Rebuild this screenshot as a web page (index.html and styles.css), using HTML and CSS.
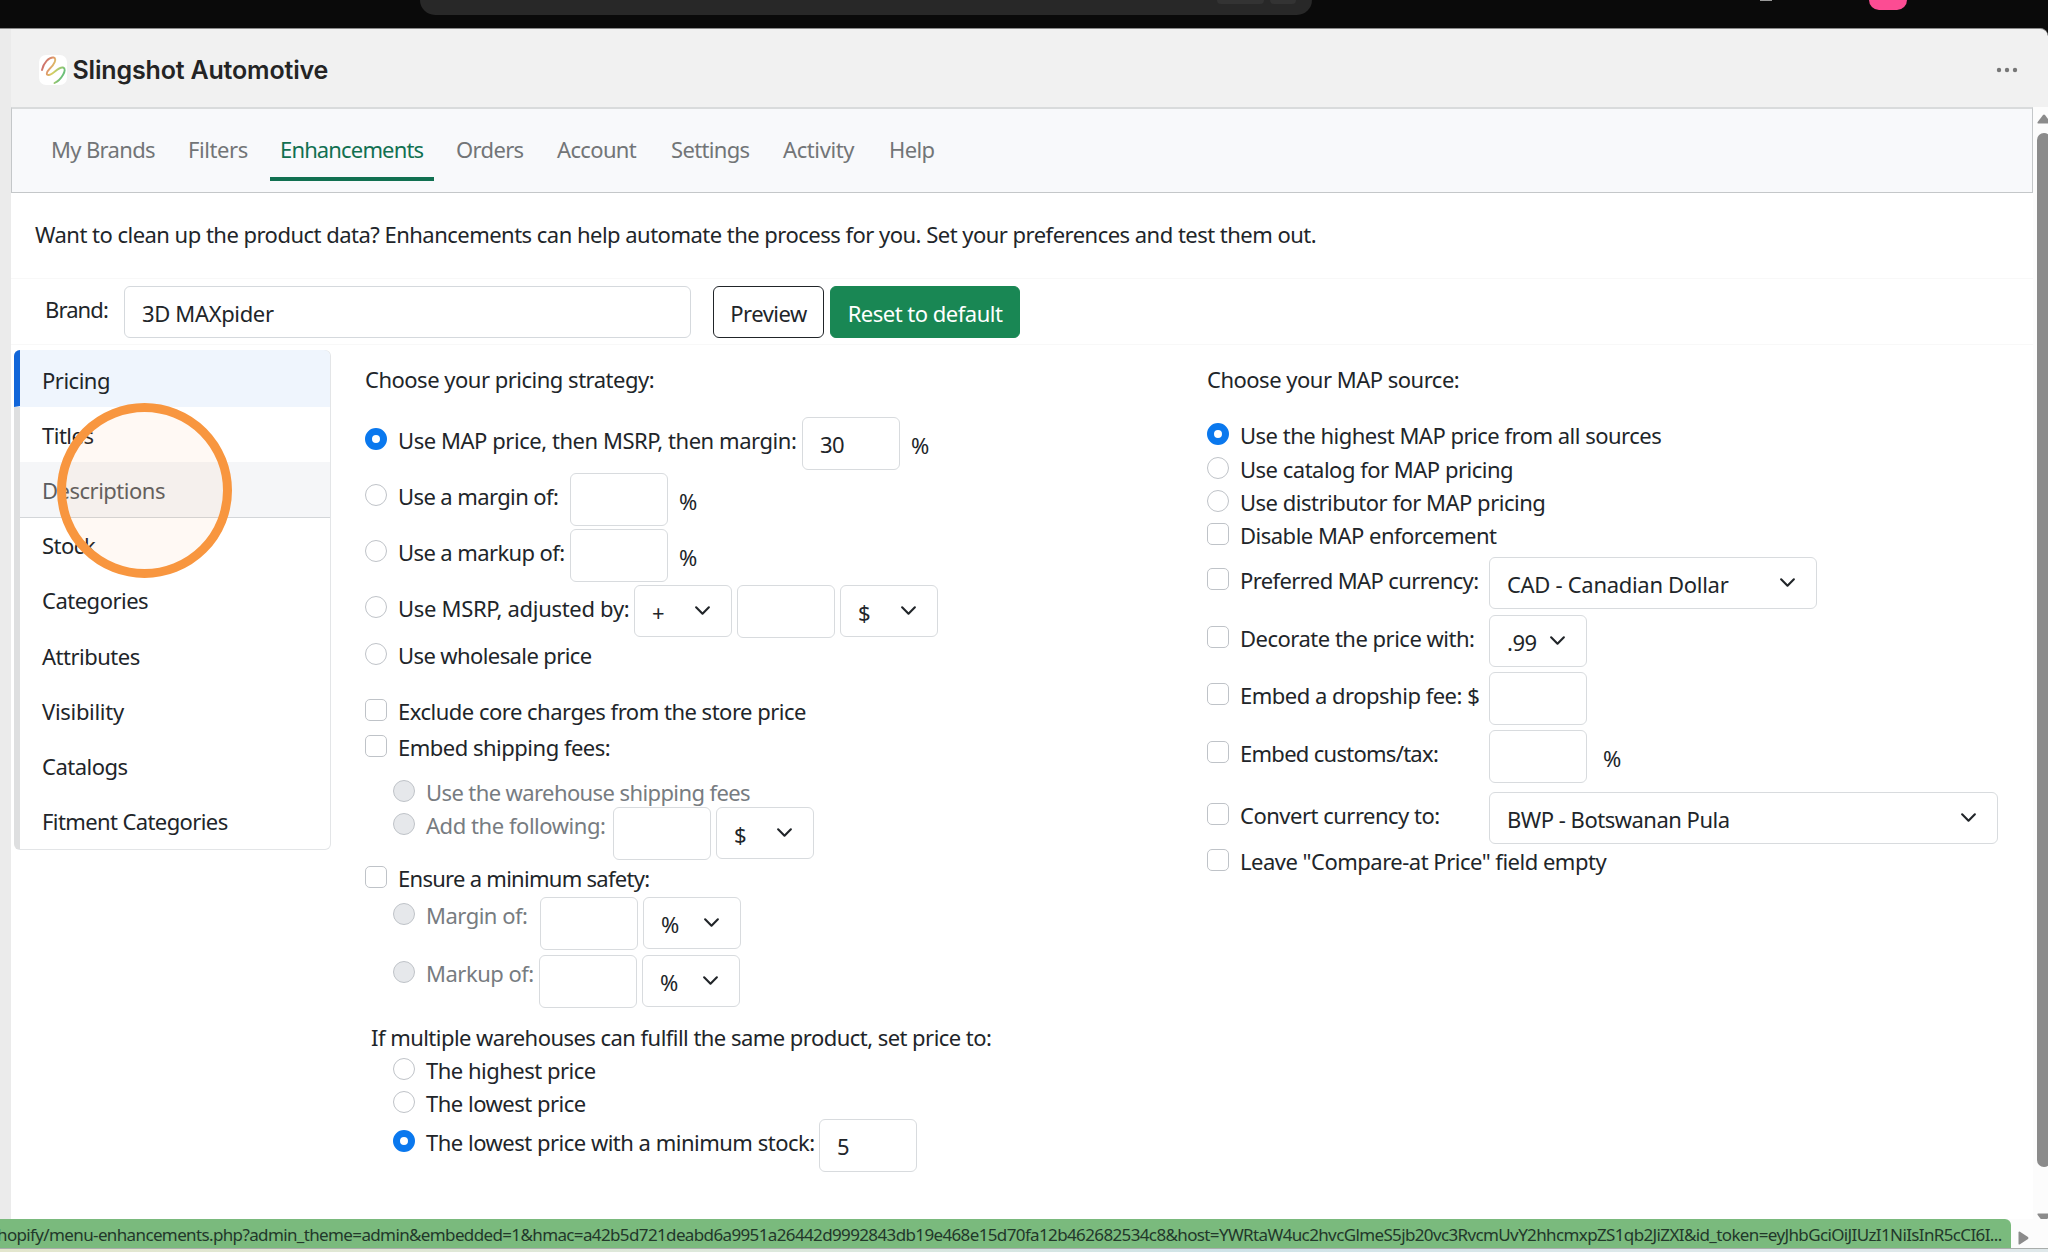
FILE: index.html
```html
<!DOCTYPE html>
<html lang="en">
<head>
<meta charset="utf-8">
<title>Slingshot Automotive</title>
<link rel="stylesheet" href="styles.css">
</head>
<body>
<svg class="defs" aria-hidden="true"><symbol id="chev" viewBox="0 0 16 16"><path d="M2 5l6 6 6-6" fill="none" stroke="#212529" stroke-width="2" stroke-linecap="round" stroke-linejoin="round"/></symbol></svg>
<div class="browser-bar">
  <div class="address"><i class="chip"></i><i class="chip small"></i></div>
  <i class="blip"></i>
  <i class="avatar"></i>
</div>
<div class="page">
  <div class="rail"></div>
  <div class="app">
    <header class="app-header">
      <svg class="logo" viewBox="0 0 28 30">
        <defs><linearGradient id="lg" x1="0" y1="0" x2="1" y2="0.5"><stop offset="0" stop-color="#c2566c"/><stop offset=".45" stop-color="#e0a06a"/><stop offset=".6" stop-color="#d9cf62"/><stop offset="1" stop-color="#6cc07a"/></linearGradient></defs>
        <rect width="28" height="30" rx="7" fill="#fff"/>
        <path d="M3 15C4.500 8 10 2 14.500 2.500C18.500 3.500 15 10 10.500 14C7 17.500 7 20.500 10 20C15 19 19 11.500 24 12.500C29 14 22 25 15.500 28" fill="none" stroke="url(#lg)" stroke-width="1.900" stroke-linecap="round"/>
      </svg>
      <h1>Slingshot Automotive</h1>
      <svg class="more" viewBox="0 0 22 6"><g fill="#777"><circle cx="3" cy="3" r="2.200"/><circle cx="11" cy="3" r="2.200"/><circle cx="19" cy="3" r="2.200"/></g></svg>
    </header>
    <div class="frame">
      <main>
        <nav class="tabs">
          <a class="t1">My Brands</a><a class="t2">Filters</a><a class="t3 active">Enhancements</a><a class="t4">Orders</a><a class="t5">Account</a><a class="t6">Settings</a><a class="t7">Activity</a><a class="t8">Help</a>
        </nav>
        <p class="intro"><span>Want to clean up the product data? Enhancements can help automate the process for you. Set your preferences and test them out.</span></p>
        <div class="brand-bar">
          <span class="brand-label">Brand:</span>
          <div class="brand-input"><span>3D MAXpider</span></div>
          <button class="btn preview"><span>Preview</span></button>
          <button class="btn reset"><span>Reset to default</span></button>
        </div>
        <div class="content">
          <aside class="menu">
            <a class="current"><span>Pricing</span></a>
            <a><span>Titles</span></a>
            <a class="hover"><span>Descriptions</span></a>
            <a><span>Stock</span></a>
            <a><span>Categories</span></a>
            <a><span>Attributes</span></a>
            <a><span class="loose">Visibility</span></a>
            <a><span>Catalogs</span></a>
            <a><span class="snug">Fitment Categories</span></a>
            <div class="pointer"></div>
          </aside>
          <section class="col left">
            <div class="heading"><span>Choose your pricing strategy:</span></div>
            <div class="row field"><div class="choice w437"><i class="radio on"></i><span class="roomy">Use MAP price, then MSRP, then margin:</span></div><div class="input"><span>30</span></div><span class="unit">%</span></div>
            <div class="row field"><div class="choice w205"><i class="radio"></i><span class="snug">Use a margin of:</span></div><div class="input"></div><span class="unit">%</span></div>
            <div class="row field"><div class="choice w205"><i class="radio"></i><span class="snug">Use a markup of:</span></div><div class="input"></div><span class="unit">%</span></div>
            <div class="row field"><div class="choice w269"><i class="radio"></i><span class="loose">Use MSRP, adjusted by:</span></div><div class="select"><span>+</span><svg><use href="#chev"/></svg></div><div class="input"></div><div class="select"><span>$</span><svg><use href="#chev"/></svg></div></div>
            <div class="row"><div class="choice"><i class="radio"></i><span class="snug">Use wholesale price</span></div></div>
            <div class="row"><div class="choice"><i class="check"></i><span>Exclude core charges from the store price</span></div></div>
            <div class="row"><div class="choice"><i class="check"></i><span>Embed shipping fees:</span></div></div>
            <div class="row sub off"><div class="choice"><i class="radio"></i><span class="snug">Use the warehouse shipping fees</span></div></div>
            <div class="row sub off tight"><div class="choice w220"><i class="radio"></i><span class="roomy">Add the following:</span></div><div class="input"></div><div class="select"><span>$</span><svg><use href="#chev"/></svg></div></div>
            <div class="row"><div class="choice"><i class="check"></i><span class="dense">Ensure a minimum safety:</span></div></div>
            <div class="row sub off tight"><div class="choice w147"><i class="radio"></i><span>Margin of:</span></div><div class="input"></div><div class="select"><span>%</span><svg><use href="#chev"/></svg></div></div>
            <div class="row sub off tight"><div class="choice w146"><i class="radio"></i><span>Markup of:</span></div><div class="input"></div><div class="select"><span>%</span><svg><use href="#chev"/></svg></div></div>
            <div class="row note"><span>If multiple warehouses can fulfill the same product, set price to:</span></div>
            <div class="row sub"><div class="choice"><i class="radio"></i><span>The highest price</span></div></div>
            <div class="row sub"><div class="choice"><i class="radio"></i><span>The lowest price</span></div></div>
            <div class="row sub field"><div class="choice w426"><i class="radio on"></i><span>The lowest price with a minimum stock:</span></div><div class="input"><span>5</span></div></div>
          </section>
          <section class="col right">
            <div class="heading"><span>Choose your MAP source:</span></div>
            <div class="row"><div class="choice"><i class="radio on"></i><span>Use the highest MAP price from all sources</span></div></div>
            <div class="row"><div class="choice"><i class="radio"></i><span>Use catalog for MAP pricing</span></div></div>
            <div class="row"><div class="choice"><i class="radio"></i><span>Use distributor for MAP pricing</span></div></div>
            <div class="row"><div class="choice"><i class="check"></i><span>Disable MAP enforcement</span></div></div>
            <div class="row field"><div class="choice w282"><i class="check"></i><span class="snug">Preferred MAP currency:</span></div><div class="select cad"><span class="loose">CAD - Canadian Dollar</span><svg><use href="#chev"/></svg></div></div>
            <div class="row field"><div class="choice w282"><i class="check"></i><span>Decorate the price with:</span></div><div class="select"><span>.99</span><svg><use href="#chev"/></svg></div></div>
            <div class="row field"><div class="choice w282"><i class="check"></i><span>Embed a dropship fee: $</span></div><div class="input"></div></div>
            <div class="row field"><div class="choice w282"><i class="check"></i><span class="dense">Embed customs/tax:</span></div><div class="input"></div><span class="unit wide">%</span></div>
            <div class="row field"><div class="choice w282"><i class="check"></i><span>Convert currency to:</span></div><div class="select bwp"><span>BWP - Botswanan Pula</span><svg><use href="#chev"/></svg></div></div>
            <div class="row"><div class="choice"><i class="check"></i><span>Leave "Compare-at Price" field empty</span></div></div>
          </section>
        </div>
      </main>
      <div class="scrollbar">
        <svg class="arrow" viewBox="0 0 14 10"><path d="M1 9.500Q0 9 .7 8L6 1Q7 0 8 1L13.300 8Q14 9 13 9.500Z" fill="#8b8b8b"/></svg>
        <div class="thumb"></div>
        <svg class="arrow" viewBox="0 0 14 10"><path d="M1 .5Q0 1 .7 2L6 9Q7 10 8 9L13.300 2Q14 1 13 .5Z" fill="#8b8b8b"/></svg>
      </div>
    </div>
  </div>
</div>
<div class="status">
  <div class="status-url"><span>hopify/menu-enhancements.php?admin_theme=admin&amp;embedded=1&amp;hmac=a42b5d721deabd6a9951a26442d9992843db19e468e15d70fa12b462682534c8&amp;host=YWRtaW4uc2hvcGlmeS5jb20vc3RvcmUvY2hhcmxpZS1qb2JiZXI&amp;id_token=eyJhbGciOiJIUzI1NiIsInR5cCI6I...</span></div>
  <svg class="right-arrow" viewBox="0 0 11 14"><path d="M.5 1Q1 0 2 .7L10 6Q11 7 10 8L2 13.300Q1 14 .5 13Z" fill="#8b8b8b"/></svg>
</div>
<div class="taskbar"></div>
</body>
</html>
```
FILE: styles.css
```css
* { box-sizing: border-box; }
body { margin: 0; width: 2048px; height: 1252px; overflow: hidden; display: flex; flex-direction: column; background: #0a0a0a; font: 22px/33px "Noto Sans", "Open Sans", sans-serif; letter-spacing: -0.5px; color: #212529; position: relative; }
.defs { position: absolute; width: 0; height: 0; }
h1, p { margin: 0; }
span { white-space: nowrap; }
.loose { letter-spacing: -0.3px; }
.roomy { letter-spacing: -0.45px; }
.snug { letter-spacing: -0.6px; }
.dense { letter-spacing: -0.72px; }

.browser-bar { height: 28px; flex: none; display: flex; align-items: flex-start; }
.address { margin-left: 420px; width: 892px; height: 15px; background: #282828; border-radius: 0 0 18px 18px; display: flex; justify-content: flex-end; gap: 6px; padding-right: 16px; }
.chip { width: 47px; height: 4px; background: #333; border-radius: 0 0 4px 4px; }
.chip.small { width: 26px; }
.blip { margin-left: 448px; width: 12px; height: 1px; background: #999; }
.avatar { margin-left: 97px; width: 38px; height: 10px; background: #fc4c93; border-radius: 0 0 10px 10px; }

.page { height: 1191px; flex: none; display: flex; background: #f1f1f1; border-top: 1px solid #8a8a8a; border-top-right-radius: 8px; }
.rail { width: 11px; background: #ebebeb; }
.app { flex: 1; display: flex; flex-direction: column; }
.app-header { height: 78px; flex: none; display: flex; align-items: center; padding: 4px 30px 0 28px; }
.logo { width: 28px; height: 30px; }
h1 { font: 600 25px/30px Inter, sans-serif; letter-spacing: -0.17px; margin-left: 5.500px; color: #242424; }
.more { width: 22px; height: 6px; margin-left: auto; }
.frame { flex: 1; display: flex; background: #fff; }
main { width: 2022px; }

.tabs { height: 86px; border: 1px solid #c4c7c9; border-top: 2px solid #d9dbdc; background: #f8f9fb; display: flex; padding: 20px 0 0 28px; }
.tabs a { color: #727577; height: 52px; padding: 4px 0 0 11px; margin-right: 11px; letter-spacing: -0.65px; }
.tabs .active { color: #117051; border-bottom: 4px solid #117051; letter-spacing: -0.85px; padding-left: 10px; }
.tabs .t2, .tabs .t7 { letter-spacing: -0.4px; }
.t1 { width: 126px; } .t2 { width: 82px; } .t3 { width: 164px; } .t4 { width: 90px; } .t5 { width: 103px; } .t6 { width: 101px; } .t7 { width: 95px; } .t8 { width: 70px; }
.intro { height: 85px; padding: 25px 0 0 24px; letter-spacing: -0.52px; }
.brand-bar { height: 67px; border-top: 1px solid #f8f8f8; border-bottom: 1px solid #f8f8f8; display: flex; align-items: flex-start; padding: 7px 0 0 34px; }
.brand-label { width: 79px; padding-top: 7px; letter-spacing: -0.9px; }
.brand-input { width: 567px; height: 52px; border: 1px solid #d5d9dd; border-radius: 6px; padding: 10px 17px; letter-spacing: -0.35px; }
.btn { height: 52px; font: inherit; letter-spacing: inherit; border-radius: 6px; border: 1px solid #212529; padding: 2px 0 0; background: #fff; color: #212529; }
.preview { width: 111px; margin-left: 22px; }
.reset { width: 190px; margin-left: 6px; background: #198754; border-color: #198754; color: #fff; }

.content { display: flex; padding: 5px 0 0 3px; }
.menu { width: 317px; height: 500px; border: 1px solid #e3e5e7; border-left: 6px solid #dedfe0; border-radius: 6px; display: flex; flex-direction: column; position: relative; }
.menu a { flex: 1 1 0; padding: 11.500px 0 0 22px; border-bottom: 1px solid transparent; }
.menu .current { margin: -1px 0 0 -6px; border-left: 6px solid #1266d9; background: #eff5fd; border-radius: 6px 6px 0 0; flex: 0 0 57px; padding-top: 14px; }
.menu .hover { background: #f5f6f8; color: #5b5d60; border-bottom-color: #d3d6d9; }
.pointer { position: absolute; left: 37px; top: 52px; width: 175px; height: 175px; border: 9px solid #f8963f; border-radius: 50%; background: rgba(248,150,63,.06); }

.col { display: grid; }
.left { margin-left: 34px; width: 842px; grid-template-rows: 67px 56px 56px 56px 58px 56px 36px 44.500px 27.500px 59px 31px 58px 72px 31px 33px 28px 53px; }
.right { grid-template-rows: 73px 33.500px 33.500px 33px 34px 57.500px 57.500px 58px 62px 57px 33px; align-content: start; }
.heading { padding-top: 13px; }
.row { display: flex; align-items: flex-start; gap: 5px; }
.choice { display: flex; align-items: flex-start; gap: 11px; }
.choice > i { flex: none; width: 22px; height: 22px; border: 1px solid #bfc3c8; background: #fff; border-radius: 50%; }
.choice > .check { border-radius: 5px; }
.choice > .on { border: 7px solid #0a78ee; }
.choice > span { margin-top: -4px; }
.field .choice { padding-top: 11px; margin-right: -5px; }
.tight .choice { padding-top: 5.500px; margin-right: -5px; }
.sub { padding-left: 28px; }
.off .choice { color: #777c81; }
.off .choice > i { background: #e6e8eb; }
.w437 { width: 437px; } .w205 { width: 205px; } .w269 { width: 269px; } .w220 { width: 220px; } .w147 { width: 147px; } .w146 { width: 146px; } .w426 { width: 426px; } .w282 { width: 282px; }
.input, .select { flex: none; width: 98px; height: 53px; border: 1px solid #d8dbde; border-radius: 6px; padding: 10px 17px 0; background: #fff; }
.select { height: 52px; display: flex; justify-content: space-between; padding: 10px 20px 0 17px; }
.select svg { width: 17px; height: 17px; margin-top: 6px; }
.cad { width: 328px; } .bwp { width: 509px; }
.unit { padding-top: 12px; margin-left: 6px; }
.unit.wide { margin-left: 11px; }
.note { padding-left: 6px; margin-top: -6px; letter-spacing: -0.54px; }

.scrollbar { width: 15px; background: #fcfcfc; padding: 7px 0 0 4px; display: flex; flex-direction: column; overflow: hidden; }
.arrow { width: 14px; height: 10px; flex: none; }
.thumb { width: 14px; height: 1034px; margin: 9px 0 46px; background: #8b8b8b; border-radius: 7px; flex: none; }

.status { height: 29px; flex: none; display: flex; background: #fcfcfc; }
.status-url { width: 2011px; background: #7aba7d; border-top-right-radius: 6px; font-size: 17px; line-height: 31px; letter-spacing: -0.63px; color: #22382a; }
.status-url span { margin-left: -3px; }
.right-arrow { width: 11px; height: 14px; margin: 12px 0 0 7px; }
.taskbar { flex: 1; border-top: 1px solid #a9adab; background: linear-gradient(90deg, #e3e6cd, #dce8dd 40%, #cfe3e8 60%, #dde8ea 80%, #dfe8ea); }
```
